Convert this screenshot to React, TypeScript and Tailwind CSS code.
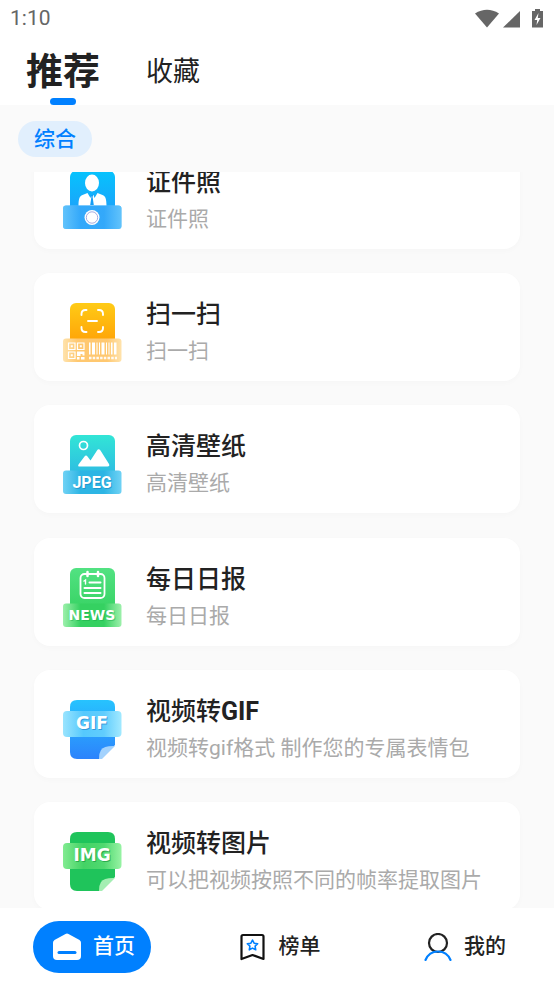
import { useState } from "react";
import type { ReactNode } from "react";

function IconDefs({ id, from, to, light }: { id: string; from: string; to: string; light: string }) {
  return (
    <defs>
      <linearGradient id={`${id}-back`} x1="0" y1="0" x2="0" y2="1">
        <stop offset="0" stopColor={from} />
        <stop offset="1" stopColor={to} />
      </linearGradient>
      <linearGradient id={`${id}-band`} x1="0" y1="0" x2="1" y2="0">
        <stop offset="0" stopColor={light} />
        <stop offset="0.3" stopColor={to} />
        <stop offset="0.7" stopColor={to} />
        <stop offset="1" stopColor={light} />
      </linearGradient>
    </defs>
  );
}

function IdPhotoIcon() {
  return (
    <svg viewBox="0 0 60 60" className="size-15 shrink-0" aria-hidden="true">
      <IconDefs id="photo" from="#06c3fd" to="#1f9dfa" light="#62c3fb" />
      <rect x="8" y="1" width="45" height="46" rx="6" fill="url(#photo-back)" />
      <ellipse cx="30" cy="13" rx="7" ry="8.500" fill="#fff" />
      <path d="M16.500 36c0-7 1-10 4-11l5-2 3 5 1-3h2l1 3 3-5 5 2c3 1 4 4 4 11z" fill="#fff" />
      <path d="M28.800 25h2.400l-.6 2 1.200 8h-3.600l1.200-8z" fill="#159df5" />
      <rect x="1" y="35.500" width="58.500" height="23.500" rx="3" fill="#62c3fb" />
      <rect x="1" y="35.500" width="58.500" height="23.500" rx="3" fill="url(#photo-band)" opacity="0.7" />
      <circle cx="30" cy="47.500" r="7.500" fill="#fff" />
      <circle cx="30" cy="47.500" r="5.700" fill="#fff" stroke="#8d96d7" strokeWidth="0.8" />
    </svg>
  );
}

function ScanIcon() {
  return (
    <svg viewBox="0 0 60 60" className="size-15 shrink-0" aria-hidden="true">
      <defs>
        <linearGradient id="scan-back" x1="0" y1="0" x2="0" y2="1">
          <stop offset="0" stopColor="#ffcb16" />
          <stop offset="1" stopColor="#ff9c05" />
        </linearGradient>
        <linearGradient id="scan-band" x1="0" y1="0" x2="1" y2="0">
          <stop offset="0" stopColor="#ffe3ad" />
          <stop offset="0.25" stopColor="#ffc870" />
          <stop offset="0.75" stopColor="#ffc870" />
          <stop offset="1" stopColor="#ffe3ad" />
        </linearGradient>
      </defs>
      <rect x="8" y="1" width="45" height="46" rx="6" fill="url(#scan-back)" />
      <path d="M19.500 13v-1q0-4 4-4h1M36 8h1q4 0 4 4v1M41 25v1q0 4-4 4h-1M24.500 30h-1q-4 0-4-4v-1M26 19h9" fill="none" stroke="#fff" strokeWidth="1.900" strokeLinecap="round" />
      <rect x="1" y="36.500" width="58.500" height="23.500" rx="3" fill="url(#scan-band)" />
      <path d="M6.500 41h6.500v6.500h-6.500zM15.500 41h6.500v6.500h-6.500zM6.500 50h6.500v6.500h-6.500z" fill="none" stroke="#fff" strokeWidth="1.200" />
      <path d="M8.800 43.300h2v2h-2zM17.800 43.300h2v2h-2zM8.800 52.300h2v2h-2zM15 49.500h7.500v4h-2v-1.500h-2v2h-3.500zM15 55h2.500v2.500h-2.500zM19 55h3.500v2.500h-3.500z" fill="#fff" />
      <path d="M27 40.500h1.500v12h-1.500zM30 40.500h3v12h-3zM34.500 40.500h1v12h-1zM37 40.500h1v12h-1zM39.500 40.500h3v12h-3zM44 40.500h1v12h-1zM46.500 40.500h1v12h-1zM49 40.500h1.500v12h-1.500zM52 40.500h2.500v12h-2.500z" fill="#fff" />
      <path d="M27 56h28" stroke="#fff" strokeWidth="2.500" strokeDasharray="2.500 1.200" opacity="0.9" />
    </svg>
  );
}

function JpegIcon() {
  return (
    <svg viewBox="0 0 60 60" className="size-15 shrink-0" aria-hidden="true">
      <IconDefs id="jpeg" from="#32e5d6" to="#2db5e4" light="#70d2f5" />
      <rect x="8" y="1" width="45" height="46" rx="6" fill="url(#jpeg-back)" />
      <circle cx="21.500" cy="11.500" r="4" fill="none" stroke="#fff" strokeWidth="1.700" />
      <path d="M17.500 32.500q-2 0-1-2l6-8q1.500-2 3 0l3 4 6.500-10q1.500-2.500 3.500 0l8.500 13.500q1 2.500-1.500 2.500z" fill="#fff" />
      <rect x="1" y="36.500" width="58.500" height="23.500" rx="3" fill="url(#jpeg-band)" />
      <text x="31" y="55" textAnchor="middle" fill="#187db5" opacity="0.5" className="font-[Roboto,sans-serif] text-[16px] font-bold">JPEG</text>
      <text x="30" y="54" textAnchor="middle" fill="#fff" className="font-[Roboto,sans-serif] text-[16px] font-bold">JPEG</text>
    </svg>
  );
}

function NewsIcon() {
  return (
    <svg viewBox="0 0 60 60" className="size-15 shrink-0" aria-hidden="true">
      <IconDefs id="news" from="#52e282" to="#35d161" light="#9df0ab" />
      <rect x="8" y="1" width="45" height="46" rx="6" fill="url(#news-back)" />
      <g fill="none" stroke="#fff" strokeLinecap="round">
        <rect x="18.500" y="7" width="24" height="24" rx="4" strokeWidth="1.800" />
        <path d="M25.500 5v4M36 5v4" strokeWidth="2.500" />
        <path d="M22 14l1.500-1v4" strokeWidth="1.400" />
        <path d="M27.500 15.500h11M22.500 21h16M22.500 26h16" strokeWidth="2" />
      </g>
      <rect x="1" y="36.500" width="58.500" height="23.500" rx="3" fill="url(#news-band)" />
      <text x="31" y="54" textAnchor="middle" fill="#159e43" opacity="0.4" className="font-['DejaVu_Sans',sans-serif] text-[14px] font-bold">NEWS</text>
      <text x="30" y="53" textAnchor="middle" fill="#fff" className="font-['DejaVu_Sans',sans-serif] text-[14px] font-bold">NEWS</text>
    </svg>
  );
}

function GifIcon() {
  return (
    <svg viewBox="0 0 60 60" className="size-15 shrink-0" aria-hidden="true">
      <defs>
        <linearGradient id="gif-back" x1="0" y1="0" x2="0" y2="1">
          <stop offset="0" stopColor="#27c3fe" />
          <stop offset="1" stopColor="#2c83fc" />
        </linearGradient>
        <linearGradient id="gif-band" x1="0" y1="0" x2="1" y2="0">
          <stop offset="0" stopColor="#9ae4fe" />
          <stop offset="0.35" stopColor="#56c9fd" />
          <stop offset="0.7" stopColor="#61cdfd" />
          <stop offset="1" stopColor="#a2e9ff" />
        </linearGradient>
      </defs>
      <path d="M15 1h31q7 0 7 7v38l-14 14H15q-7 0-7-7V8q0-7 7-7z" fill="url(#gif-back)" />
      <path d="M53 47L40 60H37Q36.500 55 39 51Q42 46.500 53 47z" fill="#a3d2fd" />
      <rect x="1" y="12" width="58.500" height="26" rx="4" fill="url(#gif-band)" />
      <text x="31" y="31" textAnchor="middle" fill="#1573bd" opacity="0.55" className="font-['DejaVu_Sans',sans-serif] text-[17px] font-bold">GIF</text>
      <text x="30" y="30" textAnchor="middle" fill="#fff" className="font-['DejaVu_Sans',sans-serif] text-[17px] font-bold">GIF</text>
    </svg>
  );
}

function ImgIcon() {
  return (
    <svg viewBox="0 0 60 60" className="size-15 shrink-0" aria-hidden="true">
      <defs>
        <linearGradient id="img-band" x1="0" y1="0" x2="1" y2="0">
          <stop offset="0" stopColor="#82eb91" />
          <stop offset="0.35" stopColor="#43d365" />
          <stop offset="0.7" stopColor="#50d970" />
          <stop offset="1" stopColor="#98f3a4" />
        </linearGradient>
      </defs>
      <path d="M15 1h31q7 0 7 7v38l-14 14H15q-7 0-7-7V8q0-7 7-7z" fill="#1fc45b" />
      <path d="M53 47L40 60H37Q36.500 55 39 51Q42 46.500 53 47z" fill="#a4eeb3" />
      <rect x="1" y="12" width="58.500" height="26" rx="4" fill="url(#img-band)" />
      <text x="31" y="31" textAnchor="middle" fill="#0d8534" opacity="0.55" className="font-['DejaVu_Sans',sans-serif] text-[17px] font-bold">IMG</text>
      <text x="30" y="30" textAnchor="middle" fill="#fff" className="font-['DejaVu_Sans',sans-serif] text-[17px] font-bold">IMG</text>
    </svg>
  );
}

const tools: { title: string; format?: string; note: string; icon: ReactNode }[] = [
  { title: "证件照", note: "证件照", icon: <IdPhotoIcon /> },
  { title: "扫一扫", note: "扫一扫", icon: <ScanIcon /> },
  { title: "高清壁纸", note: "高清壁纸", icon: <JpegIcon /> },
  { title: "每日日报", note: "每日日报", icon: <NewsIcon /> },
  { title: "视频转", format: "GIF", note: "视频转gif格式 制作您的专属表情包", icon: <GifIcon /> },
  { title: "视频转图片", note: "可以把视频按照不同的帧率提取图片", icon: <ImgIcon /> },
];

function StatusBar() {
  return (
    <div className="flex h-[38px] shrink-0 items-center justify-between pr-[7px] pl-2.5 text-[#666]">
      <span className="text-[21px]">1:10</span>
      <svg viewBox="0 0 72 20" className="h-5 w-[72px]" fill="currentColor" aria-hidden="true">
        <path d="M0 4.500Q12 -3 24 4.500L12 18.500z" />
        <path d="M45 2v16.500H28z" />
        <path d="M60 0h5v2h3v16.500H57V2h3z" />
        <path d="M63.500 4l-4 7h2.700l-.7 5 4-7h-2.700z" fill="#fff" />
      </svg>
    </div>
  );
}

function HomeIcon() {
  return (
    <svg viewBox="0 0 28 28" className="size-7" aria-hidden="true">
      <path d="M12.500 1q1.500-.8 3 0l11 6q1.500 1 1.500 2.500V23q0 4-4 4H4q-4 0-4-4V9.500Q0 8 1.500 7z" fill="#fff" />
      <path d="M6 19.500h16" stroke="#0080ff" strokeWidth="3" strokeLinecap="round" />
    </svg>
  );
}

function RankIcon() {
  return (
    <svg viewBox="0 0 28 28" className="size-7" fill="none" strokeLinejoin="round" aria-hidden="true">
      <path d="M4 2h19q1.500 0 1.500 1.500V26l-11-4-11 4V3.500Q2.500 2 4 2z" stroke="#111" strokeWidth="2.200" />
      <path d="M13.500 7l1.600 3.200 3.600.5-2.600 2.500.6 3.600-3.200-1.700-3.200 1.700.6-3.600-2.600-2.500 3.600-.5z" stroke="#0080ff" strokeWidth="1.600" />
    </svg>
  );
}

function ProfileIcon() {
  return (
    <svg viewBox="0 0 28 28" className="size-7" fill="none" strokeWidth="2.200" strokeLinecap="round" aria-hidden="true">
      <circle cx="14" cy="10" r="9" stroke="#222" />
      <path d="M1.500 27q3.500-8.500 12.500-8.500T26.500 27" stroke="#0080ff" />
    </svg>
  );
}

export default function App() {
  const [tab, setTab] = useState("推荐");
  return (
    <div className="flex h-screen flex-col overflow-hidden bg-white font-[Roboto,'Noto_Sans_CJK_SC',sans-serif] text-[#222]">
      <StatusBar />
      <header className="flex h-[67px] shrink-0 items-center gap-11 bg-white px-[26px]">
        {["推荐", "收藏"].map((name) => (
          <button
            key={name}
            type="button"
            onClick={() => setTab(name)}
            className={
              tab === name
                ? "relative flex h-full flex-col items-center text-[37px] leading-[69px] font-bold after:absolute after:bottom-0 after:h-[7px] after:w-[26px] after:rounded-full after:bg-[#0080ff]"
                : "flex h-full flex-col items-center px-0.5 text-[27px] leading-[69px]"
            }
          >
            {name}
          </button>
        ))}
      </header>
      <div className="flex h-[67px] shrink-0 items-center bg-[#fafafa] px-[18px]">
        <button type="button" className="h-9 rounded-full bg-[#e1effd] px-4 text-[21px] leading-9 font-medium text-[#0080ff]">
          综合
        </button>
      </div>
      <main className="flex min-h-0 flex-1 flex-col overflow-hidden bg-[#fafafa] px-[34px]">
        <ul className="-mt-[31px] -mb-[2px] flex flex-1 shrink-0 flex-col justify-between gap-6">
          {tools.map((tool) => (
            <li key={tool.note} className="flex h-[108px] shrink-0 items-start gap-6 rounded-2xl bg-white pl-7 shadow-[0_2px_6px_rgba(0,0,0,0.02)]">
              <div className="pt-[29px]">{tool.icon}</div>
              <div className="min-w-0 pt-6 whitespace-nowrap">
                <h2 className="text-[25px] leading-9 font-medium">
                  {tool.title}
                  {tool.format && <b className="font-bold">{tool.format}</b>}
                </h2>
                <p className="text-[21px] leading-9 text-[#aaa]">{tool.note}</p>
              </div>
            </li>
          ))}
        </ul>
      </main>
      <nav className="flex h-[77px] shrink-0 items-center justify-between bg-white pr-12 pl-[33px] text-[21px] font-medium">
        <button type="button" className="flex h-[52px] items-center gap-3 rounded-full bg-[#0080ff] pr-4 pl-5 text-white">
          <HomeIcon />
          首页
        </button>
        <button type="button" className="flex items-center gap-3 pr-4">
          <RankIcon />
          榜单
        </button>
        <button type="button" className="flex items-center gap-3">
          <ProfileIcon />
          我的
        </button>
      </nav>
    </div>
  );
}
